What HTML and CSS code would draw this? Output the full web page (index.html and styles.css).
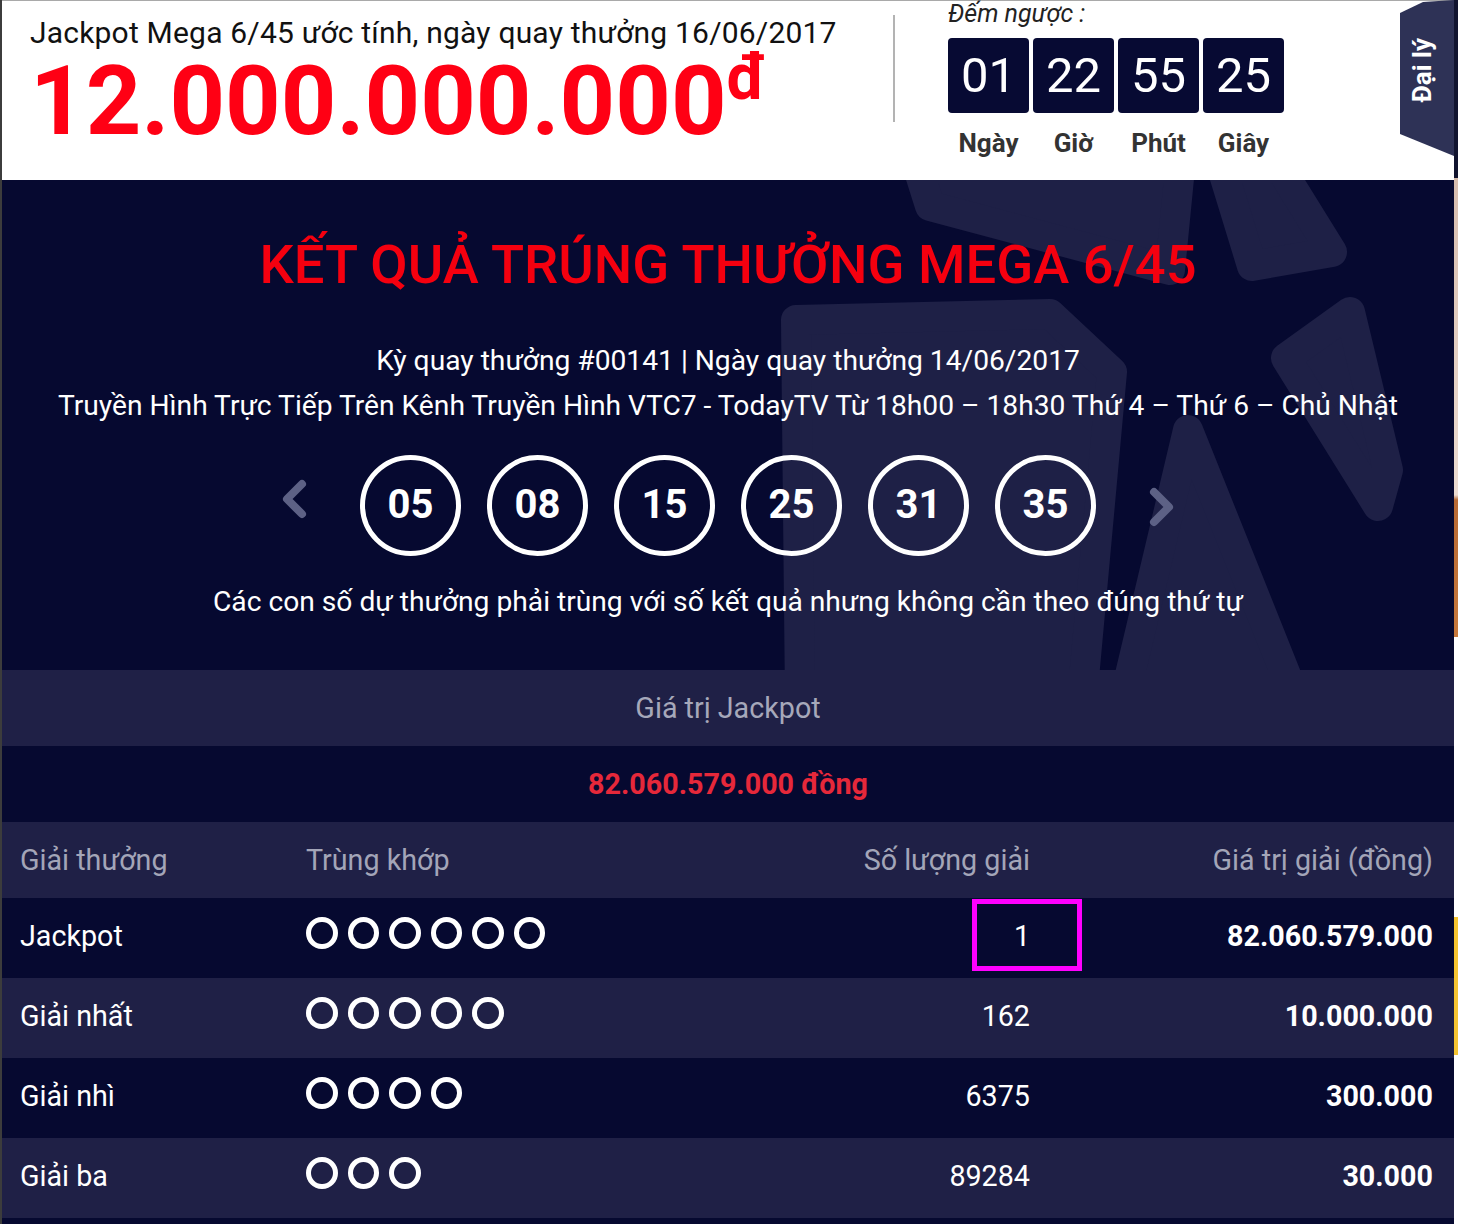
FILE: index.html
```
<!DOCTYPE html>
<html lang="vi">
<head>
    <meta charset="UTF-8">
    <meta name="viewport" content="width=device-width, initial-scale=1.0">
    <title>Kết quả Mega 6/45</title>
    <link rel="stylesheet" href="styles.css">
</head>
<body>
    <div class="page">
        <div class="main">
            <header class="top">
                <div class="jackpot">
                    <p class="jackpot-title">Jackpot Mega 6/45 ước tính, ngày quay thưởng 16/06/2017</p>
                    <p class="jackpot-amount">12.000.000.000<span class="cur">đ</span></p>
                </div>
                <div class="divider"></div>
                <div class="countdown">
                    <p class="countdown-label">Đếm ngược :</p>
                    <div class="countdown-grid">
                        <span class="digit">01</span>
                        <span class="digit">22</span>
                        <span class="digit">55</span>
                        <span class="digit">25</span>
                        <span class="unit">Ngày</span>
                        <span class="unit">Giờ</span>
                        <span class="unit">Phút</span>
                        <span class="unit">Giây</span>
                    </div>
                </div>
                <a class="agent-tab" href="#"><span>Đại lý</span></a>
            </header>

            <section class="result">
                <svg class="result-bg" viewBox="2 180 1452 490" width="1452" height="490">
                    <g fill="#1e2046" stroke="#1e2046" stroke-width="30" stroke-linejoin="round">
                        <polygon points="918,168 1180,168 1170,270 930,206"/>
                        <polygon points="1222,168 1280,168 1332,252 1252,266"/>
                        <polygon points="796,320 1050,314 1112,372 1082,700 800,700"/>
                        <polygon points="1188,430 1296,700 1124,700"/>
                        <polygon points="1286,358 1350,312 1388,470 1378,506"/>
                    </g>
                </svg>
                <h1 class="result-title">KẾT QUẢ TRÚNG THƯỞNG MEGA 6/45</h1>
                <p class="info info-first">Kỳ quay thưởng #00141 | Ngày quay thưởng 14/06/2017</p>
                <p class="info">Truyền Hình Trực Tiếp Trên Kênh Truyền Hình VTC7 - TodayTV Từ 18h00 – 18h30 Thứ 4 – Thứ 6 – Chủ Nhật</p>
                <div class="balls">
                    <svg class="arrow arrow-prev" width="26" height="101" viewBox="0 0 26 101">
                        <path d="M21 29 L6 44 L21 59"/>
                    </svg>
                    <span class="ball">05</span>
                    <span class="ball">08</span>
                    <span class="ball">15</span>
                    <span class="ball">25</span>
                    <span class="ball">31</span>
                    <span class="ball">35</span>
                    <svg class="arrow arrow-next" width="26" height="101" viewBox="0 0 26 101">
                        <path d="M5 37 L20 52 L5 67"/>
                    </svg>
                </div>
                <p class="info note">Các con số dự thưởng phải trùng với số kết quả nhưng không cần theo đúng thứ tự</p>
            </section>

            <div class="band band-label">Giá trị Jackpot</div>
            <div class="band band-value">82.060.579.000 đồng</div>

            <div class="prizes">
                <div class="prize-row prize-head">
                    <span>Giải thưởng</span>
                    <span>Trùng khớp</span>
                    <span class="num">Số lượng giải</span>
                    <span class="num">Giá trị giải (đồng)</span>
                </div>
                <div class="prize-row">
                    <span>Jackpot</span>
                    <span class="rings"><i></i><i></i><i></i><i></i><i></i><i></i></span>
                    <span class="num"><span class="marked">1</span></span>
                    <span class="num value">82.060.579.000</span>
                </div>
                <div class="prize-row">
                    <span>Giải nhất</span>
                    <span class="rings"><i></i><i></i><i></i><i></i><i></i></span>
                    <span class="num">162</span>
                    <span class="num value">10.000.000</span>
                </div>
                <div class="prize-row">
                    <span>Giải nhì</span>
                    <span class="rings"><i></i><i></i><i></i><i></i></span>
                    <span class="num">6375</span>
                    <span class="num value">300.000</span>
                </div>
                <div class="prize-row">
                    <span>Giải ba</span>
                    <span class="rings"><i></i><i></i><i></i></span>
                    <span class="num">89284</span>
                    <span class="num value">30.000</span>
                </div>
            </div>
        </div>
        <div class="edge"></div>
    </div>
</body>
</html>
```

FILE: styles.css
```
body {
    margin: 0;
    background: #fff;
    font-family: Roboto, "Noto Sans", sans-serif;
}
p, h1 {
    margin: 0;
}
.page {
    display: flex;
    align-items: flex-start;
}
.main {
    width: 1452px;
    border-left: 2px solid #3c3c3c;
    background: #060930;
    padding-bottom: 20px;
}
.edge {
    width: 4px;
    height: 1224px;
    background: linear-gradient(to bottom,
        #11142f 0, #11142f 178px,
        #d7bdae 178px, #ecdcd1 495px,
        #b86a34 500px, #c7793c 637px,
        #fff 637px, #fff 917px,
        #f6c431 917px, #f6c431 1055px,
        #fff 1055px);
}

/* header */
.top {
    position: relative;
    display: flex;
    height: 179px;
    background: #fff;
    border-top: 1px solid #a9a9a9;
}
.jackpot {
    width: 891px;
    padding-left: 28px;
    box-sizing: border-box;
}
.jackpot-title {
    margin-top: 15px;
    font-size: 30px;
    line-height: 34px;
    letter-spacing: 0.2px;
    color: #111;
}
.jackpot-amount {
    margin-top: 1px;
    font-size: 97px;
    line-height: 100px;
    font-weight: 700;
    color: #ff0014;
}
.cur {
    display: inline-block;
    vertical-align: top;
    margin-top: -5px;
    font-size: 64px;
    line-height: 64px;
}
.divider {
    width: 2px;
    height: 107px;
    margin-top: 14px;
    background: #b3b3b3;
}
.countdown {
    margin-left: 53px;
}
.countdown-label {
    font-size: 25px;
    line-height: 26px;
    font-style: italic;
    color: #222;
}
.countdown-grid {
    display: grid;
    grid-template-columns: repeat(4, 81px);
    column-gap: 4px;
    margin-top: 11px;
}
.digit {
    height: 75px;
    line-height: 75px;
    border-radius: 4px;
    background: #070a33;
    color: #fff;
    font-size: 49px;
    text-align: center;
}
.unit {
    margin-top: 15px;
    font-size: 26px;
    line-height: 30px;
    font-weight: 700;
    color: #333;
    text-align: center;
}
.agent-tab {
    position: absolute;
    top: -1px;
    right: 0;
    width: 54px;
    height: 156px;
    box-sizing: border-box;
    padding: 38px 10px 0 0;
    display: flex;
    flex-direction: column;
    align-items: center;
    background: #2e3256;
    clip-path: polygon(0 13px, 23px 2px, 100% 0, 100% 100%, 0 134px);
    color: #fff;
    text-decoration: none;
}
.agent-tab span {
    writing-mode: vertical-rl;
    transform: rotate(180deg);
    font-size: 26px;
    font-weight: 700;
    line-height: 30px;
}

/* result block */
.result {
    position: relative;
    overflow: hidden;
    height: 490px;
    box-sizing: border-box;
    padding-top: 53px;
    text-align: center;
    color: #fff;
}
.result-bg {
    position: absolute;
    top: 0;
    left: 0;
}
.result-title, .info, .balls {
    position: relative;
}
.result-title {
    font-size: 54.3px;
    line-height: 64px;
    font-weight: 500;
    color: #f5000f;
}
.info {
    font-size: 28.2px;
    line-height: 45px;
}
.info-first {
    margin-top: 41px;
}
.balls {
    display: flex;
    justify-content: center;
    align-items: center;
    gap: 26px;
    margin-top: 27px;
}
.arrow {
    fill: none;
    stroke: #5d6185;
    stroke-width: 8;
    stroke-linecap: round;
    stroke-linejoin: round;
}
.arrow-prev {
    margin-right: 27px;
}
.arrow-next {
    margin-left: 27px;
}
.ball {
    width: 101px;
    height: 101px;
    box-sizing: border-box;
    border: 5px solid #fff;
    border-radius: 50%;
    font-size: 40px;
    font-weight: 700;
    line-height: 89px;
}
.note {
    margin-top: 23px;
}

/* jackpot value bands */
.band {
    height: 76px;
    line-height: 76px;
    text-align: center;
    font-size: 28.7px;
}
.band-label {
    background: #1f2046;
    color: #a6a8ba;
}
.band-value {
    font-weight: 700;
    color: #e6283a;
}

/* prize table */
.prize-row {
    display: grid;
    grid-template-columns: 286px 1fr 300px 403px;
    align-items: center;
    height: 80px;
    padding: 0 21px 4px 18px;
    box-sizing: border-box;
    font-size: 28.7px;
    color: #fff;
}
.prize-row:nth-child(odd) {
    background: #1f2046;
}
.prize-head {
    height: 76px;
    padding-bottom: 0;
    color: #a3a5b8;
}
.num {
    text-align: right;
}
.value {
    font-weight: 700;
}
.rings {
    display: flex;
    gap: 10px;
    margin-top: -6px;
}
.rings i {
    width: 31.5px;
    height: 32px;
    box-sizing: border-box;
    border: 5px solid #fff;
    border-radius: 50%;
}
.marked {
    position: relative;
}
.marked::after {
    content: "";
    position: absolute;
    top: -20px;
    bottom: -18px;
    left: -42px;
    right: -52px;
    border: 5px solid #ff00ff;
}
```
